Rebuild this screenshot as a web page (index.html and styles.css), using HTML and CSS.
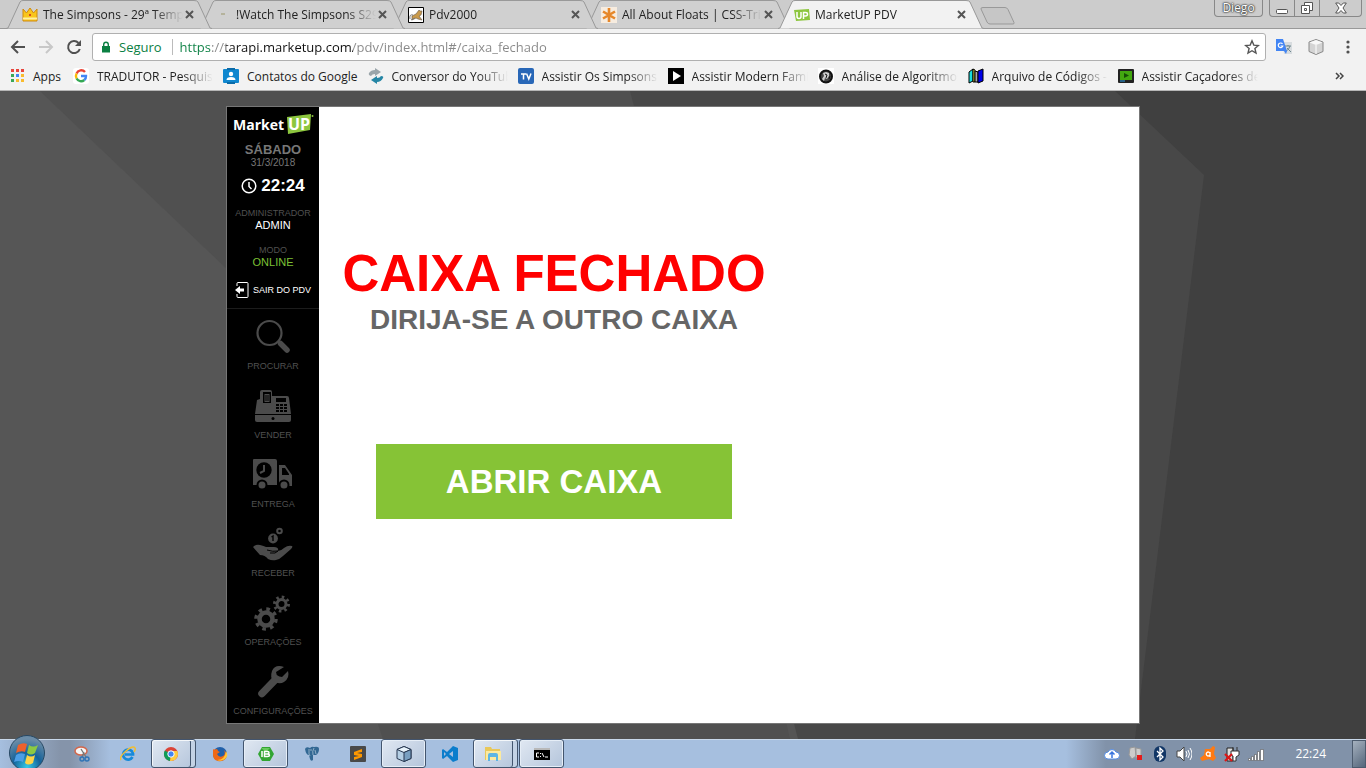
FILE: index.html
```html
<!DOCTYPE html>
<html lang="pt-BR">
<head>
<meta charset="utf-8">
<title>MarketUP PDV</title>
<link rel="stylesheet" href="styles.css">
</head>
<body>
<div class="screen">
  <header class="browser">
    <div class="tabstrip">
      <div class="tab tab-1">
        <svg class="tab-shape" viewBox="0 0 206 29" preserveAspectRatio="none"><path d="M0 28.500L2 28 14 2Q15 .5 17 .5H188Q191 .5 192 2L204 28L206 28.500"/></svg>
        <div class="tab-body">
          <svg class="icon" viewBox="0 0 16 16"><path d="M1 2l3.500 4L8 1l3.500 5L15 2v12H1z" fill="#f9c51c" stroke="#cf8a0e"/><path d="M1 11.500h14" stroke="#fff0a0" stroke-width="2"/><circle cx="8" cy="8" r="1" fill="#c22"/></svg>
          <span class="tab-title">The Simpsons - 29ª Temp</span>
          <button class="close" aria-label="Fechar guia"><svg viewBox="0 0 9 9"><path d="M1 1l7 7M8 1L1 8"/></svg></button>
        </div>
      </div>
      <div class="tab tab-2">
        <svg class="tab-shape" viewBox="0 0 206 29" preserveAspectRatio="none"><path d="M0 28.500L2 28 14 2Q15 .5 17 .5H188Q191 .5 192 2L204 28L206 28.500"/></svg>
        <div class="tab-body">
          <svg class="icon" viewBox="0 0 16 16"><path d="M6 7h4" stroke="#b5b39c" stroke-width="2"/></svg>
          <span class="tab-title">!Watch The Simpsons S29</span>
          <button class="close" aria-label="Fechar guia"><svg viewBox="0 0 9 9"><path d="M1 1l7 7M8 1L1 8"/></svg></button>
        </div>
      </div>
      <div class="tab tab-3">
        <svg class="tab-shape" viewBox="0 0 206 29" preserveAspectRatio="none"><path d="M0 28.500L2 28 14 2Q15 .5 17 .5H188Q191 .5 192 2L204 28L206 28.500"/></svg>
        <div class="tab-body">
          <svg class="icon" viewBox="0 0 16 16"><path d="M.5.5h15v15H.5z" fill="#fff" stroke="#000"/><path d="M4 9l4-2 3-4 1 1h2l-1 4-2 1 3 4-4-1-2-1-4 2z" fill="#c99a4c" stroke="#654" stroke-width=".6"/><path d="M2 12q-1-5 3-4M3 13l4-2" fill="none" stroke="#777"/></svg>
          <span class="tab-title">Pdv2000</span>
          <button class="close" aria-label="Fechar guia"><svg viewBox="0 0 9 9"><path d="M1 1l7 7M8 1L1 8"/></svg></button>
        </div>
      </div>
      <div class="tab tab-4">
        <svg class="tab-shape" viewBox="0 0 206 29" preserveAspectRatio="none"><path d="M0 28.500L2 28 14 2Q15 .5 17 .5H188Q191 .5 192 2L204 28L206 28.500"/></svg>
        <div class="tab-body">
          <svg class="icon" viewBox="0 0 16 16"><path d="M0 0h16v16H0z" fill="#f7ecdf"/><path d="M8 1v14M2 4.500l12 7M14 4.500l-12 7" stroke="#e6872a" stroke-width="2.600"/></svg>
          <span class="tab-title">All About Floats | CSS-Tri</span>
          <button class="close" aria-label="Fechar guia"><svg viewBox="0 0 9 9"><path d="M1 1l7 7M8 1L1 8"/></svg></button>
        </div>
      </div>
      <div class="tab tab-active">
        <svg class="tab-shape" viewBox="0 0 206 29" preserveAspectRatio="none"><path d="M0 28.500L2 28 14 2Q15 .5 17 .5H188Q191 .5 192 2L204 28L206 28.500"/></svg>
        <div class="tab-body">
          <svg class="icon" viewBox="0 0 16 16"><path d="M0 3l15-1 1 11-14 1z" fill="#8dc63f"/><path d="M3 5v4.500q0 2 2 2t2-2V5M9.500 12V5.500h2q2 0 2 1.700t-2 1.800h-2" fill="none" stroke="#fff" stroke-width="1.500"/></svg>
          <span class="tab-title">MarketUP PDV</span>
          <button class="close" aria-label="Fechar guia"><svg viewBox="0 0 9 9"><path d="M1 1l7 7M8 1L1 8"/></svg></button>
        </div>
      </div>
      <button class="new-tab" aria-label="Nova guia"><svg viewBox="0 0 36 18"><path d="M3 .5h22q2 0 3 2l6 13q.5 1.500-1 1.500H10q-2 0-3-2L1 2q-.5-1.500 2-1.500z"/></svg></button>
      <div class="window-controls">
        <button class="user">Diego</button>
        <div class="window-group">
          <button aria-label="Minimizar"><svg viewBox="0 0 12 12"><rect x=".5" y="7.500" width="11" height="4" rx="1"/></svg></button>
          <button aria-label="Restaurar"><svg viewBox="0 0 12 12"><path d="M3.500 3.500v-3h8v8h-3"/><path d="M.5 3.500h8v8h-8z"/><path d="M3.500 6.500h2v2h-2z"/></svg></button>
          <button class="wide" aria-label="Fechar"><svg viewBox="0 0 12 12"><path d="M.7 1h3L6 3.500 8.300 1h3L8 6l3.300 5h-3L6 8.500 3.700 11h-3L4 6z"/></svg></button>
        </div>
      </div>
    </div>

    <div class="toolbar">
      <button class="tool" aria-label="Voltar"><svg class="icon" viewBox="0 0 16 16"><path d="M15 8H2M8 2L2 8l6 6" fill="none" stroke="#505050" stroke-width="2"/></svg></button>
      <button class="tool" aria-label="Avançar"><svg class="icon" viewBox="0 0 16 16"><path d="M1 8h13M8 2l6 6-6 6" fill="none" stroke="#c8c8c8" stroke-width="2"/></svg></button>
      <button class="tool" aria-label="Recarregar"><svg class="icon" viewBox="0 0 16 16"><path d="M13.800 10A6 6 0 1 1 12.500 4" fill="none" stroke="#505050" stroke-width="2"/><path d="M15 1v6H9z" fill="#505050"/></svg></button>
      <div class="omnibox">
        <svg class="lock" viewBox="0 0 10 12"><path d="M1 5h8v6.500H1z" fill="#0b8043"/><path d="M2.700 5V3.500a2.300 2.300 0 0 1 4.600 0V5" fill="none" stroke="#0b8043" stroke-width="1.400"/></svg>
        <span class="secure">Seguro</span>
        <input class="url" type="text" aria-label="Endereço" value="https://tarapi.marketup.com/pdv/index.html#/caixa_fechado">
        <button class="tool" aria-label="Favoritar"><svg class="icon" viewBox="0 0 16 16"><path d="M8 1.800l1.800 4.300 4.600.4-3.500 3 1.100 4.600L8 11.700l-4 2.400 1.100-4.600-3.500-3 4.600-.4z" fill="none" stroke="#555" stroke-width="1.400"/></svg></button>
      </div>
      <div class="extensions">
        <button class="tool" aria-label="Tradutor"><svg class="icon" viewBox="0 0 16 16"><path d="M6 3h10v12H8z" fill="#d8dcdf"/><path d="M9 7h6M12 6v1M14 7q-1 4-4 5M11 9l4 4" stroke="#6d878d" fill="none"/><path d="M0 0h7l4 12-1 3-2-3H0z" fill="#4285f4"/><path d="M6.500 5a2.300 2.300 0 1 0 .3 2H4.500" fill="none" stroke="#fff" stroke-width="1.200"/></svg></button>
        <button class="tool" aria-label="Extensão"><svg class="icon" viewBox="0 0 16 16"><path d="M8 .5l7 2.500v9.500L8 15.500l-7-3V3z" fill="#d4d4d4" stroke="#888"/><path d="M1.500 3.500L8 6l6.500-2.500L8 1z" fill="#f8f8f8"/><path d="M8 6v9" stroke="#fff"/></svg></button>
        <button class="tool" aria-label="Menu"><svg class="icon" viewBox="0 0 16 16"><g fill="#505050"><circle cx="8" cy="3" r="1.600"/><circle cx="8" cy="8" r="1.600"/><circle cx="8" cy="13" r="1.600"/></g></svg></button>
      </div>
    </div>

    <nav class="bookmarks">
      <a class="bookmark apps" href="#"><svg class="icon" viewBox="0 0 16 16"><path d="M2 1h3v3H2zM7 1h3v3H7zM12 1h3v3h-3z" fill="#e8453c"/><path d="M2 6h3v3H2zM2 11h3v3H2z" fill="#3aa757"/><path d="M7 6h3v3H7z" fill="#4285f4"/><path d="M12 6h3v3h-3zM7 11h3v3H7zM12 11h3v3h-3z" fill="#f9bb2d"/></svg><span>Apps</span></a>
      <a class="bookmark faded" href="#"><svg class="icon" viewBox="0 0 16 16"><rect width="16" height="16" rx="3" fill="#fff"/><g fill="none" stroke-width="2.400"><path d="M12 4A5 5 0 0 0 3.600 5.500" stroke="#ea4335"/><path d="M3.600 5.500a5 5 0 0 0 0 5" stroke="#fbbc05"/><path d="M3.600 10.500A5 5 0 0 0 11.300 12" stroke="#34a853"/><path d="M11.300 12A5 5 0 0 0 13 8H8" stroke="#4285f4"/></g></svg><span>TRADUTOR - Pesquis</span></a>
      <a class="bookmark" href="#"><svg class="icon" viewBox="0 0 16 16"><rect y="1" width="16" height="14" rx="1" fill="#0f87cf"/><path d="M4 0h8v2H4zM4 14h8v2H4z" fill="#0b6ba8"/><circle cx="8" cy="6" r="2.200" fill="#fff"/><path d="M3.500 12q0-3 4.500-3t4.500 3z" fill="#fff"/></svg><span>Contatos do Google</span></a>
      <a class="bookmark faded" href="#"><svg class="icon" viewBox="0 0 16 16"><path d="M1 5q2-3 6-3V0l6 4-6 4V6Q4 6 3 8 0 7 1 5z" fill="#9aa5aa"/><path d="M15 10q-2 4-6 4v2l-6-4 6-4v2q3 0 4-2 3 0 2 2z" fill="#2586a5"/></svg><span>Conversor do YouTub</span></a>
      <a class="bookmark faded" href="#"><svg class="icon" viewBox="0 0 16 16"><rect width="16" height="16" rx="2" fill="#2867b7"/><path d="M3 6h5M5.500 6v5.500M8.500 5.500l2.300 5.500L13 5.500" fill="none" stroke="#fff" stroke-width="1.500"/></svg><span>Assistir Os Simpsons</span></a>
      <a class="bookmark faded" href="#"><svg class="icon" viewBox="0 0 16 16"><path d="M0 0h16v16H0z"/><path d="M5 3l8 5-8 5z" fill="#fff"/></svg><span>Assistir Modern Famil</span></a>
      <a class="bookmark faded" href="#"><svg class="icon" viewBox="0 0 16 16"><path d="M0 0h16v16H0z" fill="#fff"/><circle cx="8" cy="8.500" r="6" fill="#444" stroke="#111" stroke-width="2"/><path d="M5 5l3-1 3 1v3l-2 3-2-1-1 3-2-2 2-3z" fill="#ccc"/><path d="M7 6l2 1-1 3M11 11l1-3" stroke="#111" fill="none"/></svg><span>Análise de Algoritmos</span></a>
      <a class="bookmark faded" href="#"><svg class="icon" viewBox="0 0 16 16"><path d="M1 4l4-3v12l-4 2z" fill="#19dede" stroke="#000"/><path d="M5 1l2 1v12H5z" fill="#eeea44" stroke="#000"/><path d="M7 3l3 1v10H7z" fill="#aaa" stroke="#000"/><path d="M10 3l5-2v12l-5 2z" fill="#0000e8" stroke="#000"/></svg><span>Arquivo de Códigos -</span></a>
      <a class="bookmark faded" href="#"><svg class="icon" viewBox="0 0 16 16"><rect y="1" width="16" height="14" rx="1" fill="#222"/><path d="M2 3h12v9H2z" fill="#43a810"/><path d="M6 5l5 2.500L6 10z" fill="#164e05"/><path d="M2 13h5" stroke="#2a9ee8"/></svg><span>Assistir Caçadores de</span></a>
      <button class="overflow" aria-label="Mais favoritos"><svg viewBox="0 0 9 8"><path d="M1 1l3 3-3 3M5 1l3 3-3 3"/></svg></button>
    </nav>
  </header>

  <main class="page">
    <svg class="backdrop" viewBox="0 0 1366 648" preserveAspectRatio="none"><path d="M0 0h1366v648H0z" fill="#555"/><path d="M40 0L227 178 383 648H0V0z" fill="#565656"/><path d="M40 0h600l150 648H383L227 178z" fill="#505050"/><path d="M630 0h736v648H798z" fill="#484848"/><path d="M1115 0l89 84-69 564h231V0z" fill="#404040"/></svg>
    <div class="app">
      <aside class="sidebar">
        <div class="status">
          <svg class="logo" viewBox="0 0 82 22" role="img" aria-label="MarketUP"><path d="M55 4l24-3-1 16-22 4z" fill="#8dc63f"/><circle cx="80.500" cy="3" r="1" fill="#8dc63f"/><text x="1" y="17" class="logo-text">Market</text><text x="56" y="17" class="logo-text logo-up">UP</text></svg>
          <div class="day">SÁBADO</div>
          <div class="date">31/3/2018</div>
          <div class="time"><svg viewBox="0 0 16 16"><circle cx="8" cy="8" r="6.800"/><path d="M8 4v4.500l2.500 2.500"/></svg>22:24</div>
          <div class="caption">ADMINISTRADOR</div>
          <div class="value">ADMIN</div>
          <div class="caption mode">MODO</div>
          <div class="value online">ONLINE</div>
          <a class="exit" href="#"><svg viewBox="0 0 14 16"><path d="M2 4V1.500q0-1 1-1h9q1 0 1 1v13q0 1-1 1H3q-1 0-1-1V12" fill="none" stroke="#fff"/><path d="M0 8l5-4v2.500h4v3H5V12z" fill="#fff"/></svg>SAIR DO PDV</a>
        </div>
        <nav class="menu">
          <a class="menu-item" href="#"><svg viewBox="0 0 40 36"><circle cx="16.500" cy="14" r="12" fill="none" stroke="#4b4b4b" stroke-width="2.200"/><path d="M25 22l2 2" stroke="#4b4b4b" stroke-width="3"/><path d="M27.500 24.500l6.500 6.500" stroke="#4b4b4b" stroke-width="5.500" stroke-linecap="round"/></svg>PROCURAR</a>
          <a class="menu-item" href="#"><svg viewBox="0 0 40 36"><path d="M4 12l3-1V4q0-2 2-2h8q2 0 2 2v4h15q2 0 2 2l2 16H2z" fill="#4b4b4b"/><path d="M2 27h36v5q0 2-2 2H4q-2 0-2-2z" fill="#4b4b4b"/><circle cx="20" cy="30.500" r="1.500"/><path d="M10 4h8v11h-8z"/><path d="M11.500 6h5v8h-5z" fill="#4b4b4b"/><path d="M12 8h4M12 10h4M12 12h4" stroke="#000"/><path d="M23 10h10v4H23z"/><path d="M23 17h11M23 20h11M23 23h11" stroke="#000" stroke-width="2.200" stroke-dasharray="3 1"/></svg>VENDER</a>
          <a class="menu-item" href="#"><svg viewBox="0 0 40 36"><path d="M1 2h21q2 0 2 2v24H0V3q0-1 1-1zM26 8h6l7 10v11H26z" fill="#4b4b4b"/><path d="M29 11h3l4 6v1h-7z"/><circle cx="11" cy="13" r="7.700"/><path d="M11 8v6l-4 2" fill="none" stroke="#4b4b4b" stroke-width="2"/><circle cx="9" cy="28" r="4.500" fill="#4b4b4b" stroke="#000" stroke-width="2"/><circle cx="31" cy="28" r="4.500" fill="#4b4b4b" stroke="#000" stroke-width="2"/></svg>ENTREGA</a>
          <a class="menu-item" href="#"><svg viewBox="0 0 40 36"><path d="M0 21q3-3 7-2 4 1 6 2h8q5 0 4 4 3 0 6-3 4-3 8-2 1 1-1 3l-8 7q-3 3-7 4-4 1-8-1-3-4-8-4z" fill="#4b4b4b"/><path d="M14 24q6 2 11 1-2 3-8 2" fill="none" stroke="#000"/><circle cx="20" cy="12.500" r="4.900" fill="#4b4b4b"/><path d="M18.500 11l1.500-1v5" stroke="#000" fill="none" stroke-width="1.400"/><circle cx="26.500" cy="5" r="2.300" fill="none" stroke="#4b4b4b" stroke-width="2"/></svg>RECEBER</a>
          <a class="menu-item" href="#"><svg viewBox="0 0 40 36"><g fill="none" stroke="#4b4b4b"><circle cx="13" cy="24" r="6.500" stroke-width="4.500"/><circle cx="13" cy="24" r="10" stroke-width="3.500" stroke-dasharray="3.600 4.254"/><circle cx="28.500" cy="9" r="4.500" stroke-width="3"/><circle cx="28.500" cy="9" r="7" stroke-width="3" stroke-dasharray="2.500 2.998"/></g></svg>OPERAÇÕES</a>
          <a class="menu-item" href="#"><svg viewBox="0 0 40 36"><path d="M9 29.500L23 15" stroke="#4b4b4b" stroke-width="7.500" stroke-linecap="round"/><path d="M31 3Q22 0 19 7q-2 6 1 10 6 4 11 1 6-4 4-11l-6 6-5-1-1-4z" fill="#4b4b4b"/></svg>CONFIGURAÇÕES</a>
        </nav>
      </aside>
      <section class="content">
        <div class="panel">
          <h1>CAIXA FECHADO</h1>
          <h2>DIRIJA-SE A OUTRO CAIXA</h2>
          <button class="open">ABRIR CAIXA</button>
        </div>
      </section>
    </div>
  </main>

  <footer class="taskbar">
    <button class="start" aria-label="Iniciar"><svg viewBox="0 0 38 38"><defs><radialGradient id="orb" cx=".5" cy=".9" r=".8"><stop offset="0" stop-color="#35cbe8"/><stop offset=".5" stop-color="#14629a"/><stop offset="1" stop-color="#6b8ca7"/></radialGradient></defs><circle cx="19" cy="19" r="17.500" fill="url(#orb)" stroke="#274863"/><path d="M10 11q5-3 9-1l-2 8q-4-2-9 1z" fill="#ed612c"/><path d="M21 11q4 3 9 0l-3 8q-4 3-8 0z" fill="#8cc943"/><path d="M8 21q4-3 9-1l-2 8q-4-2-9 0z" fill="#4b9ee6"/><path d="M19 21q4 3 8 0l-2 8q-5 3-8 0z" fill="#fdd448"/></svg></button>
    <div class="tasks">
      <button class="task" aria-label="Captura"><svg viewBox="0 0 16 16"><ellipse cx="7" cy="5" rx="6" ry="4" fill="#f6f6f6" stroke="#d3674b" stroke-width="1.500"/><path d="M7 3l5 8M10 6l-2 5" stroke="#777" stroke-width="1.300"/><circle cx="8" cy="13" r="2" fill="none" stroke="#2f74b6" stroke-width="1.400"/><circle cx="13" cy="13" r="2" fill="none" stroke="#2f74b6" stroke-width="1.400"/></svg></button>
      <button class="task" aria-label="Internet Explorer"><svg viewBox="0 0 16 16"><path d="M12.500 11A5 5 0 1 1 13 7.500v1H5" fill="none" stroke="#168ada" stroke-width="2.700"/><path d="M1 14Q-1 11 6 5t9-3q1 1-1 4" fill="none" stroke="#efbd35" stroke-width="1.500"/></svg></button>
      <button class="task open-task stacked" aria-label="Chrome"><svg viewBox="0 0 16 16"><circle cx="8" cy="8" r="7" fill="#db4437"/><path d="M8 8L1.900 4.500A7 7 0 0 0 7 15z" fill="#0f9d58"/><path d="M8 8h7a7 7 0 0 1-8 7z" fill="#ffcd40"/><path d="M8 5h6.300A7 7 0 0 1 15 8l-4 1z" fill="#ffcd40"/><circle cx="8" cy="8" r="3.200" fill="#4285f4" stroke="#fff"/></svg></button>
      <button class="task" aria-label="Firefox"><svg viewBox="0 0 16 16"><circle cx="8" cy="8" r="7" fill="#2160a9"/><path d="M1 3q1 1 3 0 2 0 2 2l2 1-3 2q2 4 6 2 3-2 1-6 4 4 2 8-3 4-8 3T1 9z" fill="#ef6816"/><path d="M14 5q3 5-1 8-4 3-8 1 8 0 9-9z" fill="#ffc735"/></svg></button>
      <button class="task open-task" aria-label="IBExpert"><svg viewBox="0 0 16 16"><path d="M4 1h8l4 7-4 7H4L0 8z" fill="#32a532"/><path d="M3 2h9L8 6z" fill="#68ca5d"/><path d="M4 5v6M6.500 5.500v5h3q2 0 2-1.200T9.500 8h-3 3q1.500 0 1.500-1.200T9.500 5.500z" stroke="#fff" stroke-width="1.500" fill="none"/></svg></button>
      <button class="task" aria-label="PostgreSQL"><svg viewBox="0 0 16 16"><path d="M1 3q1-3 5-1 2-2 4-1 5-1 5 2 0 4-3 6H9v5q-2 2-3-1l-1-4q-3 0-4-6z" fill="#326894"/><path d="M5 3v5l1 2M10 2q-2 3-1 7M11 4l1 4M6 4h2" stroke="#b9cddd" fill="none" stroke-width=".7"/></svg></button>
      <button class="task" aria-label="Sublime"><svg viewBox="0 0 16 16"><rect width="16" height="16" rx="1" fill="#494949"/><path d="M12 3L4 6v3l5 1-5 1v3l8-3V8L7 7l5-1z" fill="#ff9800"/></svg></button>
      <button class="task open-task" aria-label="VirtualBox"><svg viewBox="0 0 16 16"><path d="M8 .5l7 3v9l-7 3-7-3v-9z" fill="#b5cfe4" stroke="#263750"/><path d="M1 3.500l7 3 7-3L8 .5z" fill="#e9f4fb" stroke="#263750"/><path d="M8 6.500l7-3v9l-7 3z" fill="#789fc0" stroke="#263750"/></svg></button>
      <button class="task" aria-label="Visual Studio Code"><svg viewBox="0 0 16 16"><path d="M11 0l5 2v12l-5 2-6-6-4 3-1-1V4l1-1 4 3zM11 5L7 8l4 3zM2 6v4l2-2z" fill="#0b7dcc" fill-rule="evenodd"/></svg></button>
      <button class="task open-task stacked" aria-label="Explorer"><svg viewBox="0 0 16 16"><path d="M0 1h6l1 2h8v11H0z" fill="#e9c85a"/><path d="M1 5h15v9H1z" fill="#fbeaa0"/><path d="M3 15V9q0-2 2-2h6q2 0 2 2v6h-2v-4H5v4z" fill="#5cb5e4"/></svg></button>
      <button class="task open-task" aria-label="Prompt"><svg viewBox="0 0 16 16"><path d="M0 2h16v12H0z"/><path d="M0 2h16v2H0z" fill="#b8b8b8"/><path d="M5 7H2.500v4H5M6.500 7v1M6.500 10v1M8 7l2 4M11 11h3" stroke="#fff" fill="none"/></svg></button>
    </div>
    <div class="tray">
      <svg viewBox="0 0 16 16"><path d="M4 13a3.500 3.500 0 0 1 0-7 4.500 4.500 0 0 1 8 0 3.500 3.500 0 0 1 0 7z" fill="#fff" stroke="#558ce5"/><path d="M8 12V6M5.500 8.500L8 6l2.500 2.500" stroke="#3975df" stroke-width="1.500" fill="none"/></svg>
      <svg viewBox="0 0 16 16"><path d="M2 2l5-1 1 9-4 3-3-4zM8 2l5 1v7l-5 2z" fill="#ccc" stroke="#999"/><path d="M9 9h5v5H9z" fill="#e51b1b"/></svg>
      <svg viewBox="0 0 16 16"><rect x="2" width="12" height="16" rx="6" fill="#113666"/><path d="M5 5l6 6-3 3V2l3 3-6 6" fill="none" stroke="#fff" stroke-width="1.300"/></svg>
      <svg viewBox="0 0 16 16"><path d="M1 5h3l4-4v14l-4-4H1z" fill="#fff" stroke="#444"/><path d="M10 5q2 3 0 6M12 4q3 4 0 8M14 2q4 6 0 12" fill="none" stroke="#fff"/></svg>
      <svg viewBox="0 0 16 16"><path d="M5 3l5 0 3-3 2 1-1 7 2 4-3 3-4-2-7 2-2-3 4-3z" fill="#ff7a12"/><path d="M10 6v5M10 9a2 2 0 1 1 0-2" fill="none" stroke="#fff" stroke-width="1.300"/></svg>
      <svg viewBox="0 0 16 16"><path d="M3 2h6v13H3z" fill="#ddd" stroke="#222"/><path d="M7 5h8v4l-3 2v4H9v-5L7 9zM9 5V1M13 5V1" fill="#fff" stroke="#333"/><path d="M1 8l7 7M8 8l-7 7" stroke="#dc1717" stroke-width="2.200"/></svg>
      <svg viewBox="0 0 16 16"><path d="M.5 12.500h2v2h-2zM3.500 10.500h2v4h-2zM6.500 8.500h2v6h-2zM9.500 5.500h2v9h-2zM12.500 3.500h3v11h-3z" fill="#fff" stroke="#555" stroke-width=".6"/></svg>
    </div>
    <time class="clock">22:24</time>
    <button class="desktop" aria-label="Mostrar área de trabalho"></button>
  </footer>
</div>
</body>
</html>
```
FILE: styles.css
```css
* { box-sizing: border-box; }

body {
  margin: 0;
  font-family: "Open Sans", "Noto Sans", sans-serif;
  font-size: 12px;
  color: #222;
}

button {
  margin: 0;
  padding: 0;
  border: 0;
  background: none;
  font: inherit;
  color: inherit;
}

a { color: inherit; text-decoration: none; }
svg { display: block; flex: none; }

.screen {
  display: flex;
  flex-direction: column;
  min-height: 100vh;
}

.icon { width: 16px; height: 16px; }

/* Browser frame */
.browser {
  background: #f2f2f2;
  border-bottom: 1px solid #b6b6b6;
}

.tabstrip {
  display: flex;
  align-items: flex-start;
  height: 29px;
  padding-left: 6px;
  background: #ccc;
  box-shadow: inset 0 -1px #999;
}

.tab {
  display: grid;
  flex: 0 1 206px;
  min-width: 0;
  height: 29px;
  margin-right: -13px;
  isolation: isolate;
  position: relative;
}

.tab-1 { z-index: 4; }
.tab-2 { z-index: 3; }
.tab-3 { z-index: 2; }
.tab-4 { z-index: 1; }
.tab-active { z-index: 5; }

.tab-shape,
.tab-body { grid-area: 1 / 1; }

.tab-shape {
  width: 100%;
  height: 29px;
  fill: #d0d0d0;
  stroke: #999;
}

.tab-active .tab-shape { fill: #f2f2f2; }

.tab-body {
  display: flex;
  align-items: center;
  min-width: 0;
  padding: 0 18px 0 16px;
}

.tab-title {
  flex: 1;
  margin: 0 2px 0 5px;
  overflow: hidden;
  white-space: nowrap;
  mask-image: linear-gradient(to left, transparent, #000 30px);
}

.close svg {
  width: 9px;
  height: 9px;
  stroke: #555;
  stroke-width: 2;
}

.new-tab { margin: 7px 0 0 9px; }

.new-tab svg {
  width: 36px;
  height: 18px;
  fill: #c6c6c6;
  stroke: #999;
}

.window-controls {
  display: flex;
  gap: 6px;
  margin: 0 4px 0 auto;
}

.user,
.window-group {
  height: 17px;
  border: 1px solid #888;
  border-top: 0;
  border-radius: 0 0 4px 4px;
}

.user {
  width: 49px;
  color: #fff;
  line-height: 16px;
  text-shadow: 0 0 1px #333, 0 0 2px #333, 0 0 2px #333;
}

.window-group { display: flex; }

.window-group button {
  display: flex;
  align-items: center;
  justify-content: center;
  width: 25px;
  border-right: 1px solid #888;
}

.window-group .wide { width: 41px; border: 0; }

.window-group svg {
  width: 12px;
  height: 12px;
  fill: #fff;
  stroke: #555;
}

.toolbar {
  display: flex;
  align-items: center;
  height: 36px;
  padding: 0 10px;
}

.toolbar > .tool { margin-right: 12px; }

.omnibox {
  display: flex;
  flex: 1;
  align-items: center;
  height: 28px;
  margin-left: -2px;
  padding: 0 5px 0 8px;
  border: 1px solid #b0b0b0;
  border-radius: 3px;
  background: #fff;
  font-size: 13px;
}

.lock { width: 10px; height: 12px; }

.secure {
  margin-left: 8px;
  padding-right: 10px;
  border-right: 1px solid #bbb;
  color: #0b8043;
  line-height: 16px;
}

.url {
  flex: 1;
  min-width: 0;
  padding: 0 0 0 7px;
  border: 0;
  outline: 0;
  font: inherit;
  line-height: 20px;
  color: transparent;
  background: linear-gradient(to right, #0b8043 39px, #888 39px 53px, #111 53px 180px, #888 180px);
  background-clip: text;
}

.extensions {
  display: flex;
  gap: 16px;
  margin-left: 10px;
}

.bookmarks {
  display: flex;
  align-items: center;
  height: 25px;
  padding: 0 22px 3px 9px;
}

.bookmark {
  display: flex;
  align-items: center;
  gap: 8px;
  margin-right: 10px;
  white-space: nowrap;
}

.apps span { width: 30px; }

.faded span {
  width: 116px;
  overflow: hidden;
  mask-image: linear-gradient(to left, transparent, #000 30px);
}

.overflow { margin-left: auto; }

.overflow svg {
  width: 9px;
  height: 8px;
  fill: none;
  stroke: #444;
  stroke-width: 1.5;
}

/* Page and its polygon backdrop */
.page {
  display: grid;
  flex: 1;
}

.backdrop {
  grid-area: 1 / 1;
  width: 100%;
  height: 0;
  min-height: 100%;
}

.app {
  grid-area: 1 / 1;
  z-index: 1;
  display: flex;
  width: 100%;
  max-width: 914px;
  margin: 15px auto;
  border: 1px solid #777;
  background: #fff;
  font-family: "Liberation Sans", Arial, sans-serif;
}

.sidebar {
  flex: none;
  width: 92px;
  background: #000;
  color: #505050;
  font-size: 9px;
  text-align: center;
}

.status {
  height: 202px;
  padding-top: 6px;
  border-bottom: 1px solid #1c1c1c;
}

.logo { width: 82px; height: 22px; margin: 0 auto; }

.logo-text {
  fill: #fff;
  font: bold 14px "Open Sans", sans-serif;
}

.logo-up { font-size: 16px; }

.day {
  margin-top: 8px;
  color: #777;
  font-size: 13px;
  font-weight: bold;
  line-height: 14px;
}

.date { color: #777; font-size: 10px; line-height: 12px; }

.time {
  display: flex;
  align-items: center;
  justify-content: center;
  gap: 4px;
  margin-top: 6px;
  color: #fff;
  font-size: 17px;
  font-weight: bold;
  line-height: 22px;
}

.time svg {
  width: 16px;
  height: 16px;
  fill: none;
  stroke: #fff;
  stroke-width: 1.5;
}

.caption { margin-top: 10px; line-height: 12px; }
.caption.mode { margin-top: 13px; }
.value { color: #fff; font-size: 11px; line-height: 12px; }
.value.online { color: #7cc035; }

.exit {
  display: flex;
  align-items: center;
  justify-content: center;
  gap: 4px;
  margin-top: 14px;
  color: #fff;
}

.exit svg { width: 14px; height: 16px; }

.menu {
  display: flex;
  flex-direction: column;
  gap: 16px;
  padding: 10px 0 5px;
}

.menu-item {
  display: flex;
  flex-direction: column;
  align-items: center;
  gap: 5px;
  line-height: 12px;
}

.menu-item svg { width: 40px; height: 36px; }

.content { flex: 1; }

.panel {
  display: flex;
  flex-direction: column;
  align-items: center;
  width: 470px;
  padding-top: 139px;
}

.panel h1 {
  margin: 0;
  color: #f00;
  font-size: 51px;
  line-height: 56px;
}

.panel h2 {
  margin: 0;
  color: #666;
  font-size: 28px;
  line-height: 36px;
}

.open {
  width: 356px;
  height: 75px;
  margin-top: 106px;
  background: #86c336;
  color: #fff;
  font-size: 33px;
  font-weight: bold;
}

/* Taskbar */
.taskbar {
  display: flex;
  align-items: center;
  height: 29px;
  background: linear-gradient(to right, #a6bfdf, #8594aa 60px 70px, #a6bfdf 110px calc(100% - 300px), #8192a9 calc(100% - 260px));
  box-shadow: inset 0 1px #c8d8ea;
}

.start {
  z-index: 1;
  margin: -6px 13px 0 8px;
}

.start svg { width: 38px; height: 38px; margin-bottom: -4px; }

.tasks {
  display: flex;
  gap: 1px;
  height: 29px;
}

.task {
  display: flex;
  align-items: center;
  justify-content: center;
  width: 45px;
}

.task svg { width: 16px; height: 16px; }

.open-task {
  border: 1px solid #43556e;
  border-radius: 3px;
  background: linear-gradient(135deg, #e0e8f2, #b4c5db);
  box-shadow: inset 0 0 0 1px #e6eef7;
}

.stacked {
  padding-right: 6px;
  box-shadow: inset 1px 1px #f4f7fa, inset -4px 0 #c3d2e5, inset -5px 0 #43556e;
}

.tray {
  display: flex;
  gap: 8px;
  margin-left: auto;
}

.tray svg { width: 16px; height: 16px; }

.clock {
  margin: 0 26px 0 31px;
  color: #fff;
}

.desktop {
  width: 14px;
  height: 28px;
  border: 1px solid #4c5b6e;
  background: linear-gradient(135deg, #a5b1bf, #55667b);
}
```
